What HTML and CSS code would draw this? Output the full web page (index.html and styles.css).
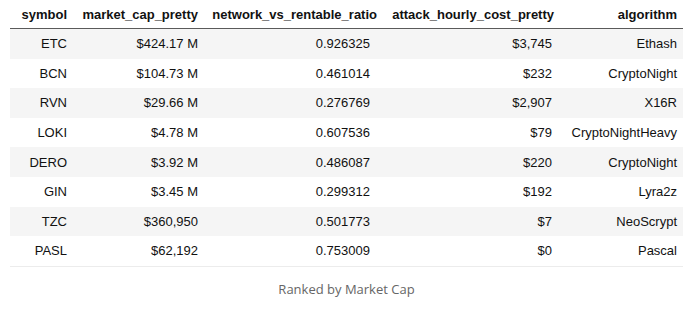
FILE: index.html
```html
<!DOCTYPE html>
<html>
<head>
<meta charset="utf-8">
<link rel="stylesheet" href="styles.css">
</head>
<body>
<div class="wrap">
<table class="data">
<colgroup>
<col class="c1"><col class="c2"><col class="c3"><col class="c4"><col class="c5">
</colgroup>
<thead>
<tr><th>symbol</th><th>market_cap_pretty</th><th>network_vs_rentable_ratio</th><th>attack_hourly_cost_pretty</th><th>algorithm</th></tr>
</thead>
<tbody>
<tr><td>ETC</td><td>$424.17 M</td><td>0.926325</td><td>$3,745</td><td>Ethash</td></tr>
<tr><td>BCN</td><td>$104.73 M</td><td>0.461014</td><td>$232</td><td>CryptoNight</td></tr>
<tr><td>RVN</td><td>$29.66 M</td><td>0.276769</td><td>$2,907</td><td>X16R</td></tr>
<tr><td>LOKI</td><td>$4.78 M</td><td>0.607536</td><td>$79</td><td>CryptoNightHeavy</td></tr>
<tr><td>DERO</td><td>$3.92 M</td><td>0.486087</td><td>$220</td><td>CryptoNight</td></tr>
<tr><td>GIN</td><td>$3.45 M</td><td>0.299312</td><td>$192</td><td>Lyra2z</td></tr>
<tr><td>TZC</td><td>$360,950</td><td>0.501773</td><td>$7</td><td>NeoScrypt</td></tr>
<tr><td>PASL</td><td>$62,192</td><td>0.753009</td><td>$0</td><td>Pascal</td></tr>
</tbody>
</table>
<p class="caption">Ranked by Market Cap</p>
</div>
</body>
</html>
```
FILE: styles.css
```css
html, body {
  margin: 0;
  padding: 0;
  background: #ffffff;
}
.wrap {
  padding: 0 17px 0 10px;
}
.data {
  width: 673px;
  border-collapse: collapse;
  table-layout: fixed;
  font-family: "Liberation Sans", Arial, sans-serif;
  color: #111;
  border-bottom: 1px solid #ececec;
}
.c1 { width: 64px; }
.c2 { width: 131px; }
.c3 { width: 179px; }
.c4 { width: 177px; }
.c5 { width: 122px; }
.data th {
  font-size: 13px;
  font-weight: bold;
  text-align: right;
  padding: 0 7px 0 0;
  height: 28px;
  border-bottom: 1px solid #5a5a5a;
  white-space: nowrap;
}
.data td {
  font-size: 13px;
  text-align: right;
  padding: 0 7px 0 0;
  height: 29.6px;
  white-space: nowrap;
}
.data td:nth-child(3) {
  padding-right: 14px;
}
.data td:nth-child(4) {
  padding-right: 9px;
}
.data th:last-child, .data td:last-child {
  padding-right: 6px;
}
.data tbody tr:nth-child(odd) {
  background: #f5f5f5;
}
.caption {
  margin: 13px 0 0 0;
  text-align: center;
  font-family: "Open Sans", sans-serif;
  font-size: 13px;
  color: #666;
  width: 673px;
}
```
